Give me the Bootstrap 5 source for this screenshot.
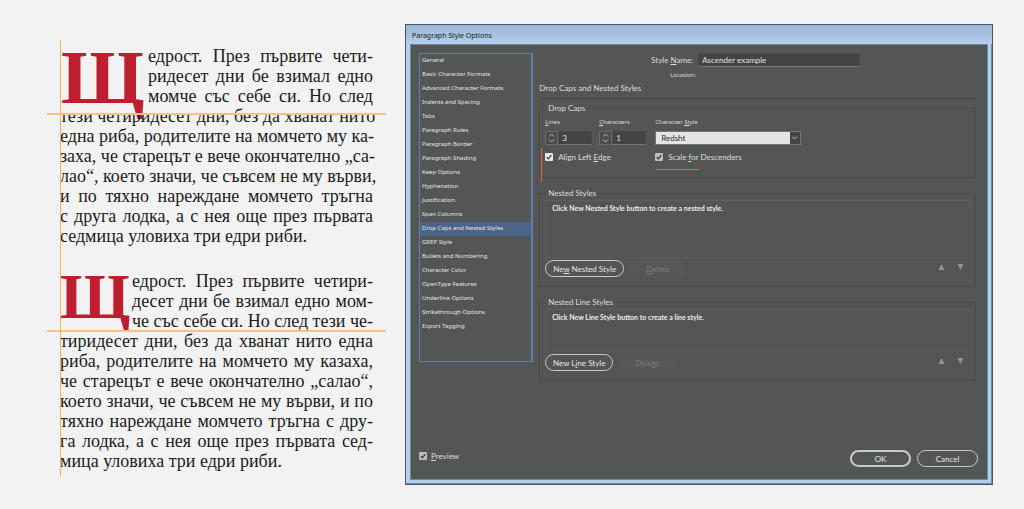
<!DOCTYPE html>
<html lang="en">
<head>
<meta charset="utf-8">
<meta name="viewport" content="width=device-width, initial-scale=1">
<title>Paragraph Style Options</title>
<link href="https://cdn.jsdelivr.net/npm/bootstrap@5.3.0/dist/css/bootstrap.min.css" rel="stylesheet">
<script defer src="https://cdn.jsdelivr.net/npm/bootstrap@5.3.0/dist/js/bootstrap.bundle.min.js"></script>
<style>
body { background: #f2f2f2; }
.page { min-height: 100vh; padding: 24px 31px 24px 60px; gap: 32px; }

/* Text sample */
.sample { flex: 313 1 0; min-width: 0; padding-top: 22px; color: #1c1c1c; font: 18px/20px "Liberation Serif", serif; }
.sample p { margin: 0 0 25px; }
.sample .ln { display: block; white-space: nowrap; text-align: justify; text-align-last: justify; }
.sample .ln:last-of-type { text-align-last: left; }
.cap { float: left; height: 60px; color: #be1e2d; font-weight: 700; }
.cap-wide { width: 88px; padding-left: 1px; font-size: 76px; line-height: 62px; }
.cap-slim { width: 72px; font-size: 64px; line-height: 52px; }
.guide-v { position: absolute; left: 0; top: 16px; bottom: 8px; width: 1px; background: #f7b15c; }
.guide-h { position: absolute; left: -13px; right: -13px; height: 2px; background: #f9c27f; }
.guide-baseline { top: 67px; }
.guide-descender { top: 59px; }

/* Dialog window */
.window { flex: 578 1 0; min-width: 0; border: 1px solid #4a5560; background: #b4cfea; padding: 0 4px 4px; box-shadow: inset -1px -1px #45a0bd; font: 8px/10px Lato, sans-serif; color: #dcdcdc; }
.window-title { height: 19px; margin: 0 -4px; padding: 4px 6px 0; background: linear-gradient(#9ab5d8, #b4cfea); color: #1a1a1a; font: 7px/14px "Noto Sans", sans-serif; }
.window-body { background: #535654; border: 1px solid #75879a; min-height: 0; }
.cats { flex: 111 1 0; min-width: 0; margin: 8px 6px 0 8px; height: 309px; border: 1px solid #5f7fa8; border-right-width: 2px; align-self: flex-start; }
.cats a { display: block; padding: 0 2px 2px; color: #e4e4e4; text-decoration: none; font: 6px/12px "Noto Sans", sans-serif; white-space: nowrap; }
.cats a.active { background: #4c6488; }
.pane { flex: 436 1 0; min-width: 0; margin-right: 11px; padding-top: 8px; }
.tiny { font: 6px/10px "Noto Sans", sans-serif; }
.field { height: 14px; padding: 0 3px; border: 1px solid #494b4a; border-bottom-color: #747675; border-radius: 0; background: #434443; color: #e0e0e0; font: 8px/12px Lato, sans-serif; }
.name-row { padding-left: 111px; gap: 5px; }
.name-row label { width: 43px; text-align: right; white-space: nowrap; }
.name-row .field { width: 162px; }
.loc { padding-left: 131px; margin-top: 3px; }
.pane-title { font: 8px/10px Lato, sans-serif; margin: 3px 0 0; padding-bottom: 5px; border-bottom: 1px solid #484a49; }
.group { position: relative; border: 1px solid #4a4c4b; border-radius: 2px; padding: 0 5px; }
.group legend { float: none; width: auto; margin: 0; padding: 0 3px; font: 8px/10px Lato, sans-serif; }
.caps { margin-top: 4px; padding-top: 4px; padding-bottom: 15px; }
.num { width: 47px; }
.num + .num { margin-left: 7px; }
.num .box, .pick .box { display: flex; margin-top: 4px; height: 14px; }
.num .step { width: 13px; height: 14px; flex: none; border: 1px solid #6a6c6b; background: #4b4d4c; padding: 0; display: block; line-height: 0; }
.num .field { width: 34px; min-width: 0; }
.pick { width: 146px; margin-left: 9px; }
.pick .box { position: relative; }
.pick select { appearance: none; width: 100%; height: 14px; padding: 0 5px; border: 1px solid #777; border-radius: 0; background: linear-gradient(90deg, #e4e4e6 134px, #444645 134px); color: #2a2a2a; font: 8px/12px Lato, sans-serif; }
.pick svg { position: absolute; right: 3px; top: 4px; pointer-events: none; }
.tick { gap: 5px; height: 10px; white-space: nowrap; }
.tick input { appearance: none; width: 8px; height: 8px; margin: 0; border-radius: 1px; background: #e6e6e6 url("data:image/svg+xml,%3Csvg xmlns='http://www.w3.org/2000/svg' viewBox='0 0 8 8'%3E%3Cpath d='M1.8 4.2 3.3 5.9 6.3 2.1' fill='none' stroke='%23333' stroke-width='1.2'/%3E%3C/svg%3E"); }
.tick input.dim { background-color: #bdbdbd; }
.checks { margin-top: 7px; }
.checks .tick:first-child { width: 110px; }
.note-v { position: absolute; left: 1px; top: 35px; height: 34px; width: 1px; background: #e8604a; }
.note-h { position: absolute; left: 116px; top: 56px; width: 43px; height: 1px; background: #e8604a; }
.nest { margin-top: 10px; padding-bottom: 9px; }
.panel-box { margin-top: 2px; border: 1px dotted #5f6160; border-top: 1px solid #5c5e62; padding: 2px 6px; font: bold 7px/10px Lato, sans-serif; color: #ececec; }
.panel-tall { height: 58px; }
.panel-low { height: 43px; }
.bar { margin-top: 2px; gap: 5px; }
.pill { height: 17px; padding: 0 6px; border: 1px solid #c9c9c9; border-radius: 9px; background: none; color: #e2e2e2; font: 8px/14px Lato, sans-serif; white-space: nowrap; }
.pill-main { width: 61px; border-width: 2px; line-height: 12px; }
.pill-side { width: 61px; }
.pill-nest { width: 79px; }
.pill-line { width: 68px; }
.pill:disabled { width: 58px; border-color: transparent; background: #575757; color: #7c7c7c; }
.move { width: 19px; height: 13px; padding: 0; border: 0; background: none; line-height: 0; }
.foot { margin-top: auto; padding: 0 9px 12px 8px; gap: 6px; }
.foot .tick { margin-bottom: 6px; gap: 4px; }
</style>
</head>
<body>
<main class="page d-flex">
  <section class="sample position-relative" lang="bg">
    <p class="position-relative"><span class="cap cap-wide">Щ</span><span class="ln">едрост. През първите чети-</span><span class="ln">ридесет дни бе взимал едно</span><span class="ln">момче със себе си. Но след</span><span class="ln">тези четиридесет дни, без да хванат нито</span><span class="ln">една риба, родителите на момчето му ка-</span><span class="ln">заха, че старецът е вече окончателно „са-</span><span class="ln">лао“, което значи, че съвсем не му върви,</span><span class="ln">и по тяхно нареждане момчето тръгна</span><span class="ln">с друга лодка, а с нея още през първата</span><span class="ln">седмица уловиха три едри риби.</span><i class="guide-h guide-baseline"></i></p>
    <p class="position-relative mb-0"><span class="cap cap-slim">Щ</span><span class="ln">едрост. През първите четири-</span><span class="ln">десет дни бе взимал едно мом-</span><span class="ln">че със себе си. Но след тези че-</span><span class="ln">тиридесет дни, без да хванат нито една</span><span class="ln">риба, родителите на момчето му казаха,</span><span class="ln">че старецът е вече окончателно „салао“,</span><span class="ln">което значи, че съвсем не му върви, и по</span><span class="ln">тяхно нареждане момчето тръгна с дру-</span><span class="ln">га лодка, а с нея още през първата сед-</span><span class="ln">мица уловиха три едри риби.</span><i class="guide-h guide-descender"></i></p>
    <i class="guide-v"></i>
  </section>

  <section class="window d-flex flex-column">
    <h1 class="window-title mb-0">Paragraph Style Options</h1>
    <form class="window-body d-flex flex-column flex-grow-1">
      <div class="d-flex">
        <nav class="cats">
          <a href="#">General</a>
          <a href="#">Basic Character Formats</a>
          <a href="#">Advanced Character Formats</a>
          <a href="#">Indents and Spacing</a>
          <a href="#">Tabs</a>
          <a href="#">Paragraph Rules</a>
          <a href="#">Paragraph Border</a>
          <a href="#">Paragraph Shading</a>
          <a href="#">Keep Options</a>
          <a href="#">Hyphenation</a>
          <a href="#">Justification</a>
          <a href="#">Span Columns</a>
          <a href="#" class="active">Drop Caps and Nested Styles</a>
          <a href="#">GREP Style</a>
          <a href="#">Bullets and Numbering</a>
          <a href="#">Character Color</a>
          <a href="#">OpenType Features</a>
          <a href="#">Underline Options</a>
          <a href="#">Strikethrough Options</a>
          <a href="#">Export Tagging</a>
        </nav>
        <div class="pane">
          <div class="name-row d-flex align-items-center">
            <label for="sname">Style <u>N</u>ame:</label>
            <input id="sname" class="field" type="text" value="Ascender example">
          </div>
          <div class="loc tiny">Location:</div>
          <h2 class="pane-title">Drop Caps and Nested Styles</h2>

          <fieldset class="group caps">
            <legend>Drop Caps</legend>
            <div class="d-flex">
              <div class="num">
                <label class="tiny d-block" for="lines"><u>L</u>ines</label>
                <div class="box"><button type="button" class="step" aria-label="Step lines"><svg width="11" height="12" viewBox="0 0 11 12" fill="none" stroke="#b5b5b5"><path d="M3 4.5 5.5 2 8 4.5M3 7.5 5.5 10 8 7.5"/></svg></button><input id="lines" class="field" type="text" value="3"></div>
              </div>
              <div class="num">
                <label class="tiny d-block" for="chars"><u>C</u>haracters</label>
                <div class="box"><button type="button" class="step" aria-label="Step characters"><svg width="11" height="12" viewBox="0 0 11 12" fill="none" stroke="#b5b5b5"><path d="M3 4.5 5.5 2 8 4.5M3 7.5 5.5 10 8 7.5"/></svg></button><input id="chars" class="field" type="text" value="1"></div>
              </div>
              <div class="pick">
                <label class="tiny d-block" for="cstyle">Character <u>St</u>yle</label>
                <div class="box"><select id="cstyle"><option>Redsht</option></select><svg width="7" height="6" viewBox="0 0 7 6" fill="none" stroke="#bbb"><path d="M1 1.5 3.5 4 6 1.5"/></svg></div>
              </div>
            </div>
            <div class="checks d-flex">
              <label class="tick d-flex align-items-center"><input type="checkbox" checked><span>Align Left <u>E</u>dge</span></label>
              <label class="tick d-flex align-items-center"><input type="checkbox" class="dim" checked><span>Scale <u>f</u>or Descenders</span></label>
            </div>
            <i class="note-v"></i><i class="note-h"></i>
          </fieldset>

          <fieldset class="group nest">
            <legend>Nested Styles</legend>
            <div class="panel-box panel-tall">Click New Nested Style button to create a nested style.</div>
            <div class="bar d-flex">
              <button type="button" class="pill pill-nest">Ne<u>w</u> Nested Style</button>
              <button type="button" class="pill" disabled><u>D</u>elete</button>
              <div class="d-flex ms-auto">
                <button type="button" class="move" aria-label="Move up"><svg width="7" height="6"><path d="M3.500 0 6.500 6H.5Z" fill="#939393"/></svg></button>
                <button type="button" class="move" aria-label="Move down"><svg width="7" height="6"><path d="M.5 0H6.500L3.500 6Z" fill="#939393"/></svg></button>
              </div>
            </div>
          </fieldset>

          <fieldset class="group nest">
            <legend>Nested Line Styles</legend>
            <div class="panel-box panel-low">Click New Line Style button to create a line style.</div>
            <div class="bar d-flex">
              <button type="button" class="pill pill-line">New L<u>i</u>ne Style</button>
              <button type="button" class="pill" disabled>Dele<u>t</u>e</button>
              <div class="d-flex ms-auto">
                <button type="button" class="move" aria-label="Move up"><svg width="7" height="6"><path d="M3.500 0 6.500 6H.5Z" fill="#939393"/></svg></button>
                <button type="button" class="move" aria-label="Move down"><svg width="7" height="6"><path d="M.5 0H6.500L3.500 6Z" fill="#939393"/></svg></button>
              </div>
            </div>
          </fieldset>
        </div>
      </div>
      <div class="foot d-flex align-items-center">
        <label class="tick d-flex align-items-center me-auto"><input type="checkbox" class="dim" checked><span><u>P</u>review</span></label>
        <button type="button" class="pill pill-main">OK</button>
        <button type="button" class="pill pill-side">Cancel</button>
      </div>
    </form>
  </section>
</main>
</body>
</html>
